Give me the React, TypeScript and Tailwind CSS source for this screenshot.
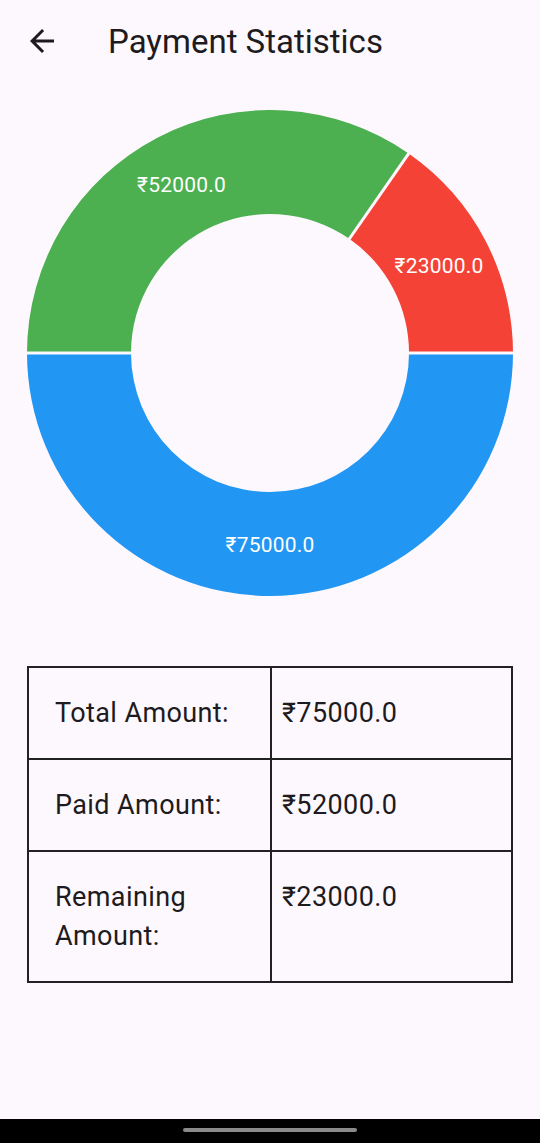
import React from "react";

const C = 243;
const R = 243;
const r = 139;

function pt(rad: number, deg: number) {
  const a = (deg * Math.PI) / 180;
  return [C + rad * Math.cos(a), C + rad * Math.sin(a)];
}

function sector(a0: number, a1: number) {
  const large = a1 - a0 > 180 ? 1 : 0;
  const [x0, y0] = pt(R, a0);
  const [x1, y1] = pt(R, a1);
  const [x2, y2] = pt(r, a1);
  const [x3, y3] = pt(r, a0);
  return `M${x0} ${y0} A${R} ${R} 0 ${large} 1 ${x1} ${y1} L${x2} ${y2} A${r} ${r} 0 ${large} 0 ${x3} ${y3} Z`;
}

function Donut() {
  const total = 150000;
  const blueEnd = 180;
  const greenEnd = 180 + (52000 / total) * 360;
  const gaps = [0, 180, greenEnd];
  return (
    <svg width="486" height="486" viewBox="0 0 486 486" className="block mx-auto">
      <path d={sector(0, blueEnd)} fill="#2196F3" />
      <path d={sector(180, greenEnd)} fill="#4CAF50" />
      <path d={sector(greenEnd, 360)} fill="#F44336" />
      {gaps.map((g, i) => {
        const [x0, y0] = pt(r - 2, g);
        const [x1, y1] = pt(R + 2, g);
        return <line key={i} x1={x0} y1={y0} x2={x1} y2={y1} stroke="#fdf8fd" strokeWidth="3" />;
      })}
      <g fill="#ffffff" fontFamily="Roboto, 'Noto Sans', sans-serif" fontSize="21" textAnchor="middle" letterSpacing="0.2">
        <text x="154.5" y="82">₹52000.0</text>
        <text x="412" y="162.5">₹23000.0</text>
        <text x="243" y="441.5">₹75000.0</text>
      </g>
    </svg>
  );
}

const rows: [string, string, boolean][] = [
  ["Total Amount:", "₹75000.0", false],
  ["Paid Amount:", "₹52000.0", false],
  ["Remaining Amount:", "₹23000.0", true],
];

export default function App() {
  return (
    <div
      className="h-[1143px] w-[540px] bg-[#fdf8fd] flex flex-col text-[#1d1b20]"
      style={{ fontFamily: "Roboto, 'Noto Sans', sans-serif" }}
    >
      <div className="h-[82px] flex items-center shrink-0">
        <div className="w-[84px] flex justify-center">
          <svg width="36" height="36" viewBox="0 0 24 24" fill="#1d1b20">
            <path d="M20 11H7.83l5.59-5.59L12 4l-8 8 8 8 1.41-1.41L7.83 13H20v-2z" />
          </svg>
        </div>
        <div className="ml-[24px] text-[33px] leading-none">Payment Statistics</div>
      </div>

      <div className="mt-[28px]">
        <Donut />
      </div>

      <div className="mt-[70px] mx-[27px] border-2 border-[#222222] text-[27px] leading-[39px] tracking-[0.4px]">
        {rows.map(([label, value, wrap], i) => (
          <div key={i} className={`grid grid-cols-2 ${i > 0 ? "border-t-2 border-[#222222]" : ""}`}>
            <div className={`pl-[26px] pr-[12px] py-[25.5px] ${wrap ? "max-w-[200px]" : ""}`}>{label}</div>
            <div className="pl-[10px] pr-[12px] py-[25.5px] border-l-2 border-[#222222]">{value}</div>
          </div>
        ))}
      </div>

      <div className="flex-1" />
      <div className="h-[24px] bg-black flex justify-center shrink-0">
        <div className="mt-[9px] w-[174px] h-[4px] rounded-full bg-[#8a8a8a]" />
      </div>
    </div>
  );
}
